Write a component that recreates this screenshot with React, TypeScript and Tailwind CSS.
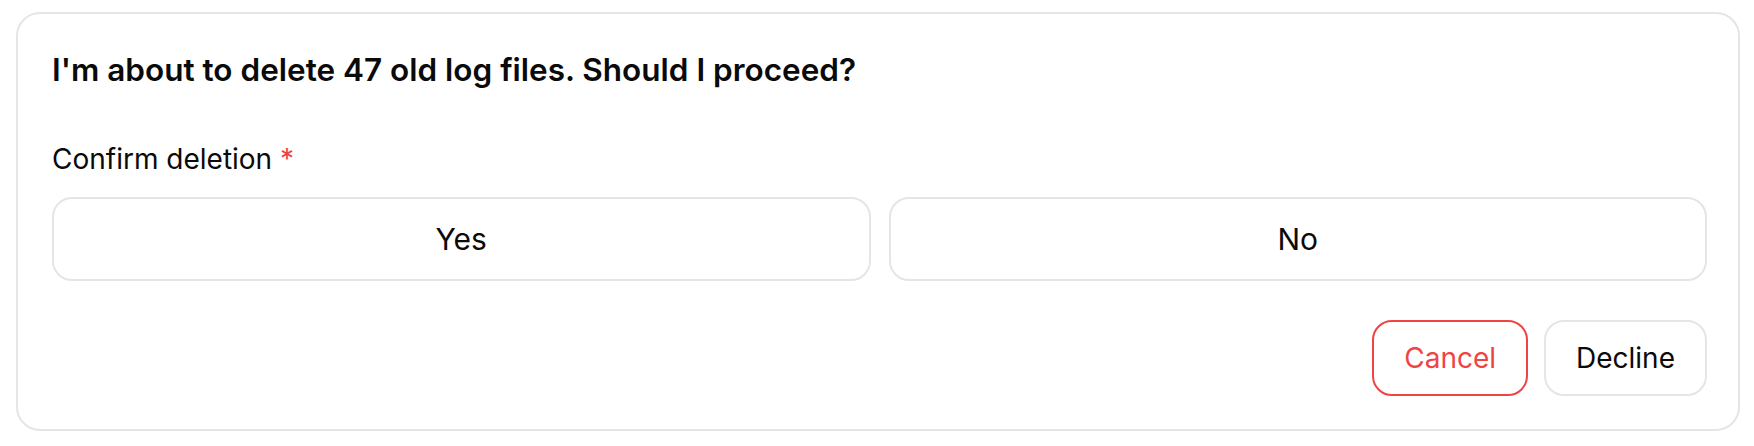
export default function App() {
  return (
    <main
      className="min-h-screen bg-white pt-3 pb-4 pl-4 pr-[14px] text-[#0a0a0a]"
      style={{ fontFamily: "Inter, 'Noto Sans', sans-serif" }}
    >
      <section className="rounded-[24px] border-2 border-[#e5e5e5] bg-white pl-[34px] pr-[31px] pt-[36px] pb-[33px]">
        <h1 className="text-[31.5px] leading-[40px] font-semibold">
          I'm about to delete 47 old log files. Should I proceed?
        </h1>

        <p className="mt-[49px] text-[28px] leading-[40px]">
          Confirm deletion <span className="text-[#ef4444]">*</span>
        </p>

        <div className="mt-[18px] grid grid-cols-2 gap-[18px]">
          <button className="h-[84px] rounded-[20px] border-2 border-[#e5e5e5] bg-white text-[30px]">
            Yes
          </button>
          <button className="h-[84px] rounded-[20px] border-2 border-[#e5e5e5] bg-white text-[30px]">
            No
          </button>
        </div>

        <div className="mt-[39px] flex justify-end gap-[16px]">
          <button className="h-[76px] rounded-[20px] border-2 border-[#ef4444] bg-white px-[30px] text-[28px] text-[#ef4444]">
            Cancel
          </button>
          <button className="h-[76px] rounded-[20px] border-2 border-[#e5e5e5] bg-white px-[30px] text-[28px]">
            Decline
          </button>
        </div>
      </section>
    </main>
  );
}
